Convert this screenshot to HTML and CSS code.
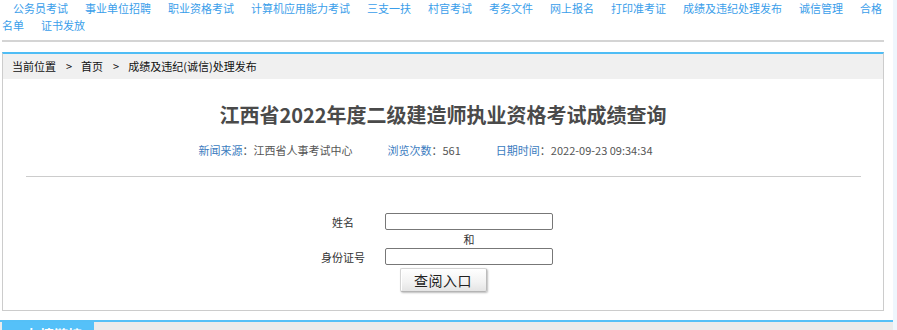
FILE: index.html
```html
<!DOCTYPE html>
<html lang="zh-CN">
<head>
<meta charset="utf-8">
<title>江西省2022年度二级建造师执业资格考试成绩查询</title>
<link rel="stylesheet" href="styles.css">
</head>
<body>
<div class="page">
  <div class="nav"><a href="#">公务员考试</a><a href="#">事业单位招聘</a><a href="#">职业资格考试</a><a href="#">计算机应用能力考试</a><a href="#">三支一扶</a><a href="#">村官考试</a><a href="#">考务文件</a><a href="#">网上报名</a><a href="#">打印准考证</a><a href="#">成绩及违纪处理发布</a><a href="#">诚信管理</a><a href="#"><span>合格</span><span>名单</span></a><a href="#">证书发放</a></div>

  <div class="article">
    <div class="crumb">当前位置<span class="sep">&gt;</span><a href="#">首页</a><span class="sep">&gt;</span><a href="#">成绩及违纪(诚信)处理发布</a></div>
    <h1 class="title">江西省2022年度二级建造师执业资格考试成绩查询</h1>
    <div class="meta"><span class="item"><span class="label">新闻来源</span>：江西省人事考试中心</span><span class="item"><span class="label">浏览次数</span>：561</span><span class="item"><span class="label">日期时间</span>：2022-09-23 09:34:34</span></div>
    <div class="divider"></div>
    <form class="query">
      <label class="lbl" for="xm">姓名</label>
      <input class="field" id="xm" type="text">
      <span class="lbl"></span>
      <span class="and">和</span>
      <label class="lbl" for="sfz">身份证号</label>
      <input class="field" id="sfz" type="text">
      <div class="btnrow"><button class="btn" type="button">查阅入口</button></div>
    </form>
  </div>

  <div class="links">
    <div class="tab">友情链接</div>
  </div>
</div>
</body>
</html>
```

FILE: styles.css
```css
html, body {
  margin: 0;
  padding: 0;
}
body {
  background: #eff6fd;
  font-family: "Noto Sans CJK SC", "Noto Sans", sans-serif;
  font-size: 11px;
  color: #333;
}
.page {
  width: 893px;
  min-height: 330px;
  background: #fff;
  overflow: hidden;
}
.nav {
  margin: 0 9px 0 2px;
  line-height: 17px;
  padding-bottom: 6px;
  border-bottom: 2px solid #d4d4d4;
}
.nav a {
  color: #3a9eea;
  text-decoration: none;
  margin: 0 6px 0 11px;
}
.article {
  margin: 10px 9px 0 2px;
  border: 1px solid #cccccc;
  border-top: 2px solid #4fbdf5;
  padding-bottom: 18px;
}
.crumb {
  height: 25px;
  line-height: 25px;
  background: #f0f0f0;
  padding-left: 9px;
  color: #111;
}
.crumb a {
  color: #111;
  text-decoration: none;
}
.crumb .sep {
  margin: 0 9px 0 10px;
}
.title {
  margin: 21px 0 0;
  font-size: 20px;
  line-height: 30px;
  font-weight: bold;
  color: #4a4a4a;
  text-align: center;
}
.meta {
  margin-top: 10px;
  line-height: 20px;
  text-align: center;
  color: #555;
}
.meta .item {
  margin-right: 35px;
}
.meta .label {
  color: #3b7cc0;
}
.divider {
  margin: 16px 22px 0 23px;
  height: 1px;
  background: #cccccc;
}
.query {
  margin: 36px 0 0;
  display: grid;
  grid-template-columns: 84px 200px;
  grid-template-rows: 17px 18px 17px auto;
  justify-content: center;
  align-items: center;
}
.lbl {
  text-align: center;
  color: #333;
}
.field {
  box-sizing: border-box;
  width: 168px;
  height: 17px;
  margin: 0;
  padding: 0 2px;
  border: 1px solid #777;
  border-radius: 2px;
  background: #fff;
  font-size: 11px;
}
.and {
  width: 168px;
  text-align: center;
  color: #333;
}
.btnrow {
  grid-column: 1 / 3;
  display: flex;
  justify-content: center;
  padding-top: 3px;
}
.btn {
  box-sizing: border-box;
  width: 87px;
  height: 24px;
  margin: 0;
  padding: 0;
  font-family: "Noto Sans CJK SC", sans-serif;
  font-size: 14px;
  line-height: 20px;
  letter-spacing: 0.5px;
  color: #222;
  background: linear-gradient(#ffffff, #f2f2f2 60%, #e4e4e4);
  border: 1px solid #d4d4d4;
  border-right-color: #bcbcbc;
  border-bottom-color: #b4b4b4;
  box-shadow: 1px 1px 2px #bdbdbd, inset 1px 1px 0 #fff;
  border-radius: 2px;
}
.links {
  margin-top: 9px;
  border-top: 2px solid #55c0f7;
  background: #ebebeb;
  height: 40px;
  padding-left: 2px;
}
.tab {
  width: 68px;
  height: 40px;
  background: #55c1f9;
  color: #fff;
  font-size: 14px;
  font-weight: bold;
  line-height: 24px;
  padding-left: 24px;
}
```
